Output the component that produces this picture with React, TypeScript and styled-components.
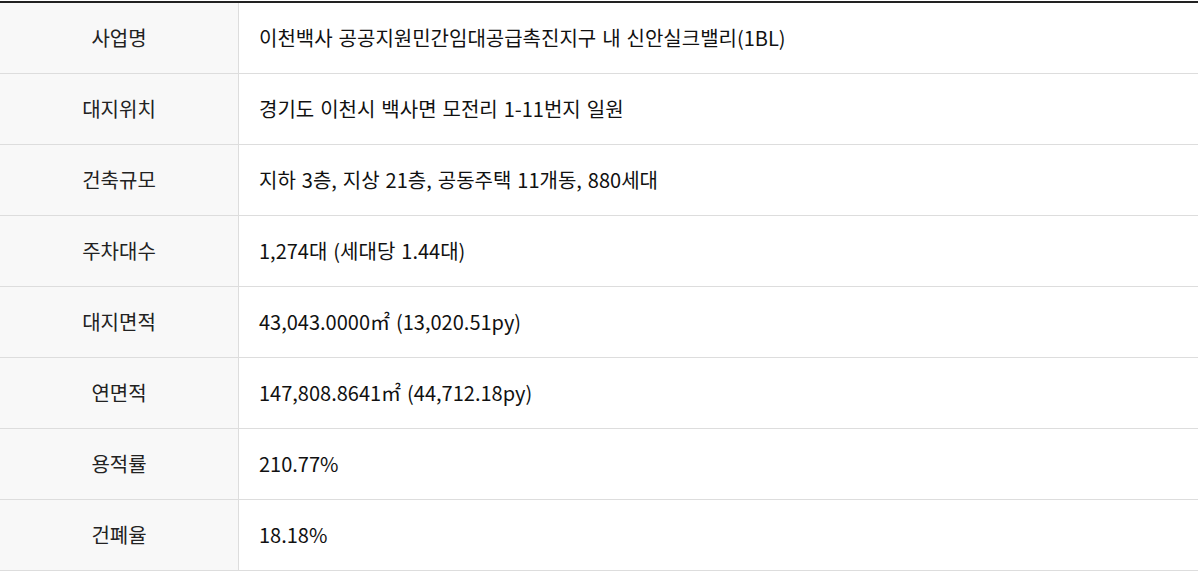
import React from "react";
import styled, {createGlobalStyle} from "styled-components";

const GlobalStyle = createGlobalStyle`
  html, body {
    margin: 0;
    padding: 0;
    background: #fff;
  }
  body {
    font-family: "Noto Sans CJK KR", "Noto Sans", sans-serif;
  }
`

const Wrap = styled.div`
  padding-top: 1px;
`

const Table = styled.table`
  width: 1198px;
  border-collapse: collapse;
  border-top: 2px solid #222;
  table-layout: fixed;
`

const Row = styled.tr`
  height: 71px;
  border-bottom: 1px solid #ddd;
`

const Label = styled.th`
  width: 238px;
  background: #f8f8f8;
  border-right: 1px solid #ddd;
  font-weight: 400;
  font-size: 20px;
  color: #222;
  text-align: center;
  padding: 0;
`

const Value = styled.td`
  font-size: 20px;
  color: #111;
  text-align: left;
  word-spacing: 1.5px;
  padding: 0 0 0 20px;
`

const rows: [string, string][] = [
    ['사업명', '이천백사 공공지원민간임대공급촉진지구 내 신안실크밸리(1BL)'],
    ['대지위치', '경기도 이천시 백사면 모전리 1-11번지 일원'],
    ['건축규모', '지하 3층, 지상 21층, 공동주택 11개동, 880세대'],
    ['주차대수', '1,274대 (세대당 1.44대)'],
    ['대지면적', '43,043.0000㎡ (13,020.51py)'],
    ['연면적', '147,808.8641㎡ (44,712.18py)'],
    ['용적률', '210.77%'],
    ['건폐율', '18.18%'],
]

const App = () => {
    return (
        <Wrap>
            <GlobalStyle/>
            <Table>
                <tbody>
                {rows.map(([label, value]) => (
                    <Row key={label}>
                        <Label scope="row">{label}</Label>
                        <Value>{value}</Value>
                    </Row>
                ))}
                </tbody>
            </Table>
        </Wrap>
    )
}

export default App
